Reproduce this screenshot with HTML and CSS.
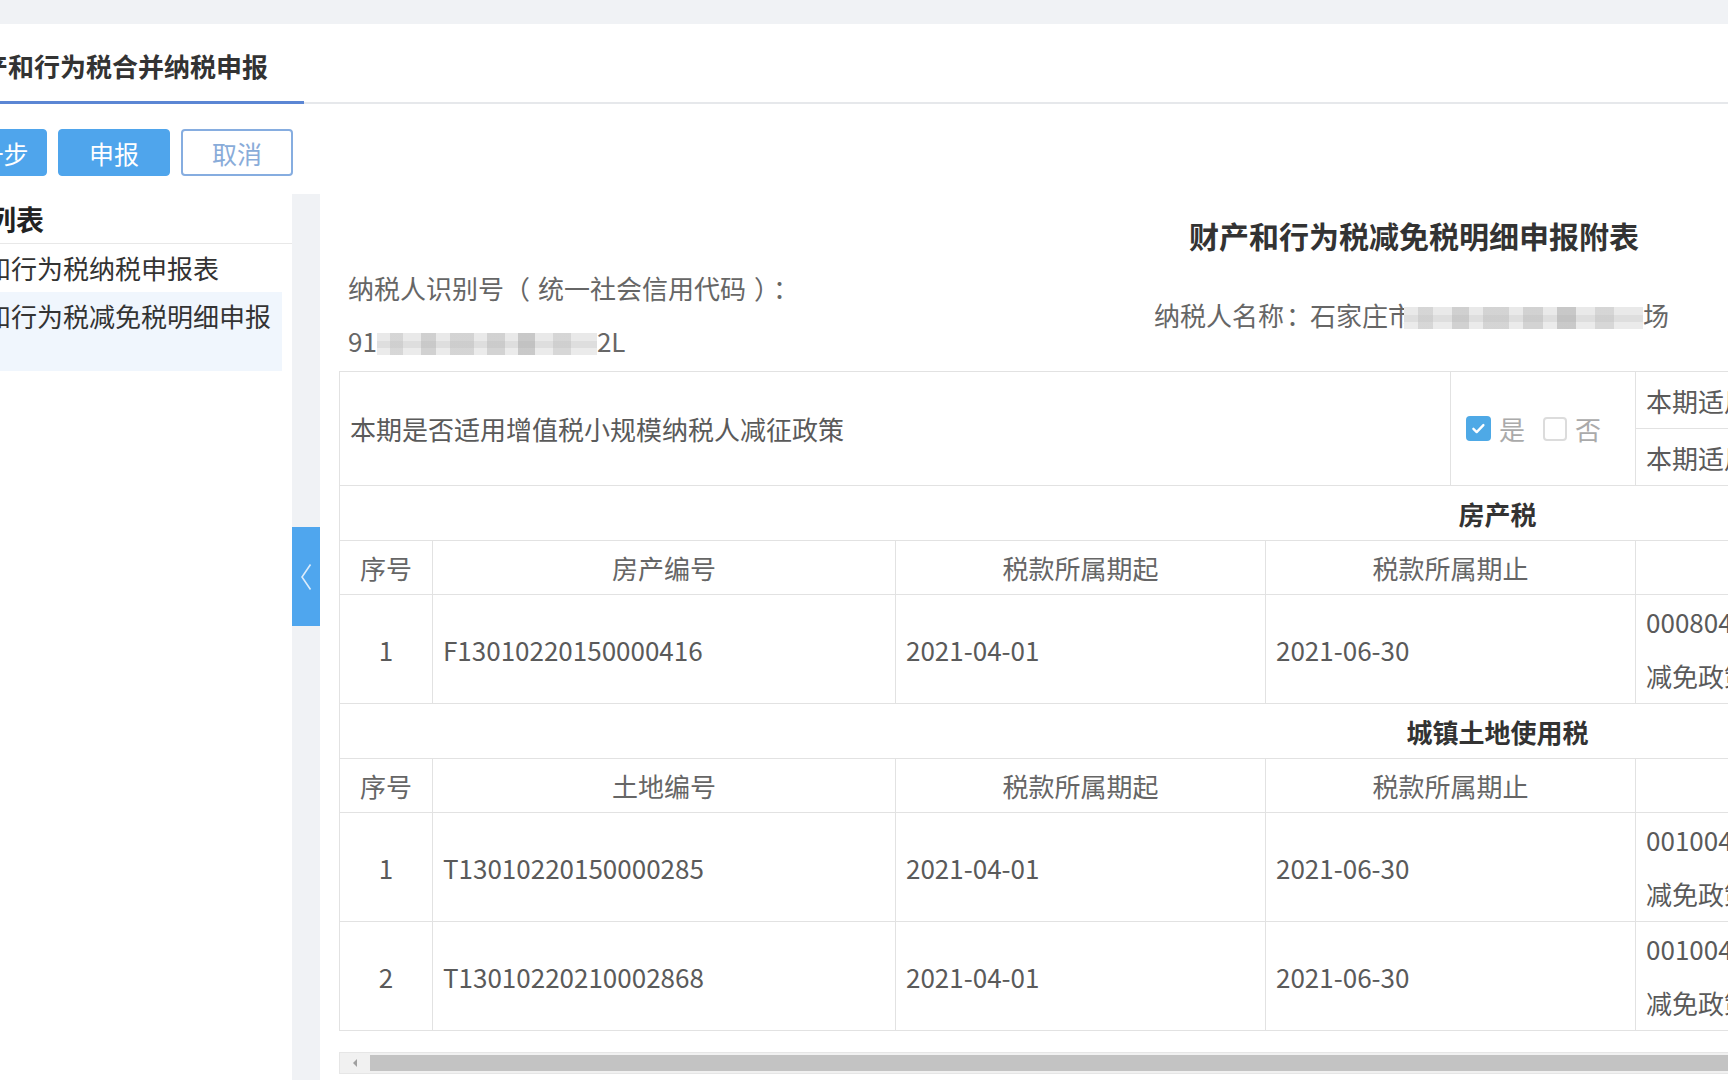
FILE: index.html
```html
<!DOCTYPE html>
<html lang="zh-CN">
<head>
<meta charset="utf-8">
<title>财产和行为税合并纳税申报</title>
<link rel="stylesheet" href="styles.css">
</head>
<body>
<div class="topbar"></div>
<div class="page">
  <div class="tabs">
    <div class="tab">财产和行为税合并纳税申报</div>
  </div>
  <div class="actions">
    <button class="btn primary">上一步</button>
    <button class="btn primary">申报</button>
    <button class="btn ghost">取消</button>
  </div>
  <div class="layout">
    <aside class="sidebar">
      <div class="side-title">报表列表</div>
      <ul class="side-list">
        <li>财产和行为税纳税申报表</li>
        <li class="active">财产和行为税减免税明细申报</li>
      </ul>
    </aside>
    <div class="collapse">
      <div class="handle">
        <svg width="12" height="28" viewBox="0 0 12 28"><path d="M10.5 1.5L2 14l8.5 12.5" stroke="#dcecfb" stroke-width="1.6" fill="none"/></svg>
      </div>
    </div>
    <main class="main">
      <h1 class="form-title">财产和行为税减免税明细申报附表</h1>
      <div class="info">
        <div class="info-left">
          <div class="info-line">纳税人识别号<span class="pl">（</span>统一社会信用代码<span class="pr">）</span><span class="pc">：</span></div>
          <div class="info-line">91<span class="blur blur-id"></span>2L</div>
        </div>
        <div class="info-right">纳税人名称<span class="pn">：</span>石家庄市<span class="blur blur-name"></span>场</div>
      </div>
      <table class="grid">
        <colgroup>
          <col class="c-no"><col class="c-code"><col class="c-date"><col class="c-half"><col class="c-half"><col class="c-rest">
        </colgroup>
        <tr class="r-half">
          <td colspan="4" rowspan="2" class="policy">本期是否适用增值税小规模纳税人减征政策</td>
          <td rowspan="2" class="checks">
            <div class="check-row">
              <span class="cb on"><svg width="17" height="17" viewBox="0 0 16 16"><path d="M3.2 8.3l3.1 3.1 6.3-6.6" stroke="#fff" stroke-width="2.2" fill="none" stroke-linecap="round" stroke-linejoin="round"/></svg></span><span class="cb-label">是</span>
              <span class="cb off"></span><span class="cb-label">否</span>
            </div>
          </td>
          <td class="left">本期适用增值税小规模纳税人减征政策起始时间</td>
        </tr>
        <tr class="r-half2">
          <td class="left">本期适用增值税小规模纳税人减征政策终止时间</td>
        </tr>
        <tr class="r-sec"><td colspan="6" class="sec">房产税</td></tr>
        <tr class="r-head">
          <td class="head">序号</td>
          <td class="head">房产编号</td>
          <td class="head">税款所属期起</td>
          <td colspan="2" class="head">税款所属期止</td>
          <td class="head">减免性质代码和项目名称</td>
        </tr>
        <tr class="r-data">
          <td class="num">1</td>
          <td class="left">F13010220150000416</td>
          <td class="left">2021-04-01</td>
          <td colspan="2" class="left">2021-06-30</td>
          <td class="left two"><div>0008049901|其他</div><div>减免政策适用主体</div></td>
        </tr>
        <tr class="r-sec"><td colspan="6" class="sec">城镇土地使用税</td></tr>
        <tr class="r-head">
          <td class="head">序号</td>
          <td class="head">土地编号</td>
          <td class="head">税款所属期起</td>
          <td colspan="2" class="head">税款所属期止</td>
          <td class="head">减免性质代码和项目名称</td>
        </tr>
        <tr class="r-data">
          <td class="num">1</td>
          <td class="left">T13010220150000285</td>
          <td class="left">2021-04-01</td>
          <td colspan="2" class="left">2021-06-30</td>
          <td class="left two"><div>0010049901|其他</div><div>减免政策适用主体</div></td>
        </tr>
        <tr class="r-data">
          <td class="num">2</td>
          <td class="left">T13010220210002868</td>
          <td class="left">2021-04-01</td>
          <td colspan="2" class="left">2021-06-30</td>
          <td class="left two"><div>0010049901|其他</div><div>减免政策适用主体</div></td>
        </tr>
      </table>
      <div class="hscroll">
        <div class="sb-arrow"><svg width="6" height="10" viewBox="0 0 6 10"><path d="M5 1L1 5l4 4z" fill="#a0a0a0"/></svg></div>
        <div class="sb-thumb"></div>
      </div>
    </main>
  </div>
</div>
</body>
</html>
```

FILE: styles.css
```css
* { box-sizing: border-box; margin: 0; padding: 0; }
html, body { height: 100%; }
body {
  font-family: "Noto Sans CJK SC", "Noto Sans", sans-serif;
  color: #5a5a5a;
  background: #fff;
  overflow: hidden;
  display: flex;
  flex-direction: column;
  height: 100vh;
}
.topbar { height: 24px; background: #f0f2f5; flex: none; }
.page {
  flex: 1;
  min-height: 0;
  display: flex;
  flex-direction: column;
  margin-left: -80px;
}
.tabs {
  height: 80px;
  flex: none;
  display: flex;
  border-bottom: 2px solid #e6e8eb;
}
.tab {
  padding: 7px 36px 0;
  line-height: 70px;
  font-size: 26px;
  font-weight: bold;
  color: #333;
  border-bottom: 3px solid #5b86d4;
  margin-bottom: -2px;
}
.actions {
  flex: none;
  display: flex;
  gap: 11px;
  margin: 25px 0 0 15px;
}
.btn {
  width: 112px;
  height: 47px;
  font-family: inherit;
  font-size: 25px;
  border-radius: 4px;
  cursor: pointer;
}
.btn.primary { background: #4fa5ec; border: 1px solid #4fa5ec; color: #fff; }
.btn.ghost { background: #fff; border: 2px solid #86ade0; color: #89acd9; }
.layout {
  flex: 1;
  min-height: 0;
  display: flex;
  margin-top: 18px;
}
.sidebar { width: 372px; flex: none; }
.side-title {
  height: 50px;
  line-height: 50px;
  padding-left: 12px;
  font-size: 28px;
  font-weight: bold;
  color: #222;
  border-bottom: 1px solid #e8e8e8;
}
.side-list { list-style: none; }
.side-list li {
  line-height: 48px;
  padding-left: 13px;
  font-size: 26px;
  color: #333;
  white-space: nowrap;
}
.side-list li.active { height: 79px; background: #f0f6fd; margin-right: 10px; }
.collapse {
  width: 28px;
  flex: none;
  background: #f0f2f5;
  padding-top: 333px;
}
.handle {
  height: 99px;
  background: #4fa6ee;
  display: flex;
  align-items: center;
  justify-content: center;
}
.main {
  flex: 1;
  min-width: 0;
  overflow: hidden;
  padding: 15px 0 0 19px;
}
.form-title {
  width: 2150px;
  text-align: center;
  font-size: 30px;
  line-height: 52px;
  font-weight: bold;
  color: #333;
}
.info { display: flex; width: 2316px; margin-bottom: 4px; }
.info-left { width: 806px; padding-left: 9px; flex: none; }
.info-line { line-height: 53px; font-size: 26px; color: #666; white-space: nowrap; }
.info-right {
  align-self: center;
  padding-left: 9px;
  font-size: 26px;
  color: #666;
  white-space: nowrap;
}
.pl { padding: 0 8px 0 0; }
.pr { padding: 0 0 0 8px; }
.pc { padding: 0 4px 0 6px; }
.pn { padding: 0 0 0 2px; margin-right: -2px; }
.blur {
  display: inline-block;
  height: 22px;
  vertical-align: -3px;
  background:
    linear-gradient(90deg, rgba(255,255,255,0) 0 6%, rgba(190,190,190,.45) 6% 12%, rgba(255,255,255,0) 12% 20%, rgba(170,170,170,.4) 20% 27%, rgba(255,255,255,0) 27% 33%, rgba(185,185,185,.45) 33% 44%, rgba(255,255,255,0) 44% 50%, rgba(175,175,175,.4) 50% 58%, rgba(255,255,255,0) 58% 64%, rgba(160,160,160,.45) 64% 72%, rgba(255,255,255,0) 72% 80%, rgba(185,185,185,.4) 80% 88%, rgba(255,255,255,0) 88% 100%),
    linear-gradient(180deg, #e9e9e9 0 35%, #dedede 35% 70%, #ebebeb 70% 100%);
}
.blur-id { width: 220px; }
.blur-name { width: 239px; margin-left: -10px; }
.grid {
  width: 2316px;
  table-layout: fixed;
  border-collapse: collapse;
  font-size: 26px;
}
.c-no { width: 93px; }
.c-code { width: 463px; }
.c-date { width: 370px; }
.c-half { width: 185px; }
.c-rest { width: 1020px; }
.grid td {
  border: 1px solid #e2e2e2;
  padding: 0 10px;
  vertical-align: middle;
  white-space: nowrap;
  overflow: hidden;
  color: #5a5a5a;
}
.r-half { height: 57px; }
.r-half2 { height: 57px; }
.r-sec { height: 55px; }
.r-head { height: 54px; }
.r-data { height: 107px; }
.grid td.checks { padding-left: 15px; }
.check-row { display: flex; align-items: center; }
.cb {
  display: inline-block;
  width: 25px;
  height: 25px;
  border-radius: 4px;
  flex: none;
}
.cb.on { background: #4ea9e6; display: inline-flex; align-items: center; justify-content: center; }
.cb.off { width: 24px; height: 24px; border: 2px solid #dcdcdc; margin-left: 18px; }
.cb-label { color: #aaa; margin-left: 8px; }
.grid td.sec { text-align: center; font-weight: bold; color: #333; }
.grid td.head { text-align: center; color: #666; }
.grid td.num { text-align: center; }
.grid td.left { padding-left: 10px; }
.grid td.two div { line-height: 54px; }
.hscroll {
  margin-top: 21px;
  height: 22px;
  width: 2316px;
  display: flex;
  background: #f1f1f1;
  border: 1px solid #e6e6e6;
}
.sb-arrow {
  width: 30px;
  flex: none;
  display: flex;
  align-items: center;
  justify-content: center;
}
.sb-thumb { flex: 1; background: #c3c3c3; margin: 2px 0; }
```
